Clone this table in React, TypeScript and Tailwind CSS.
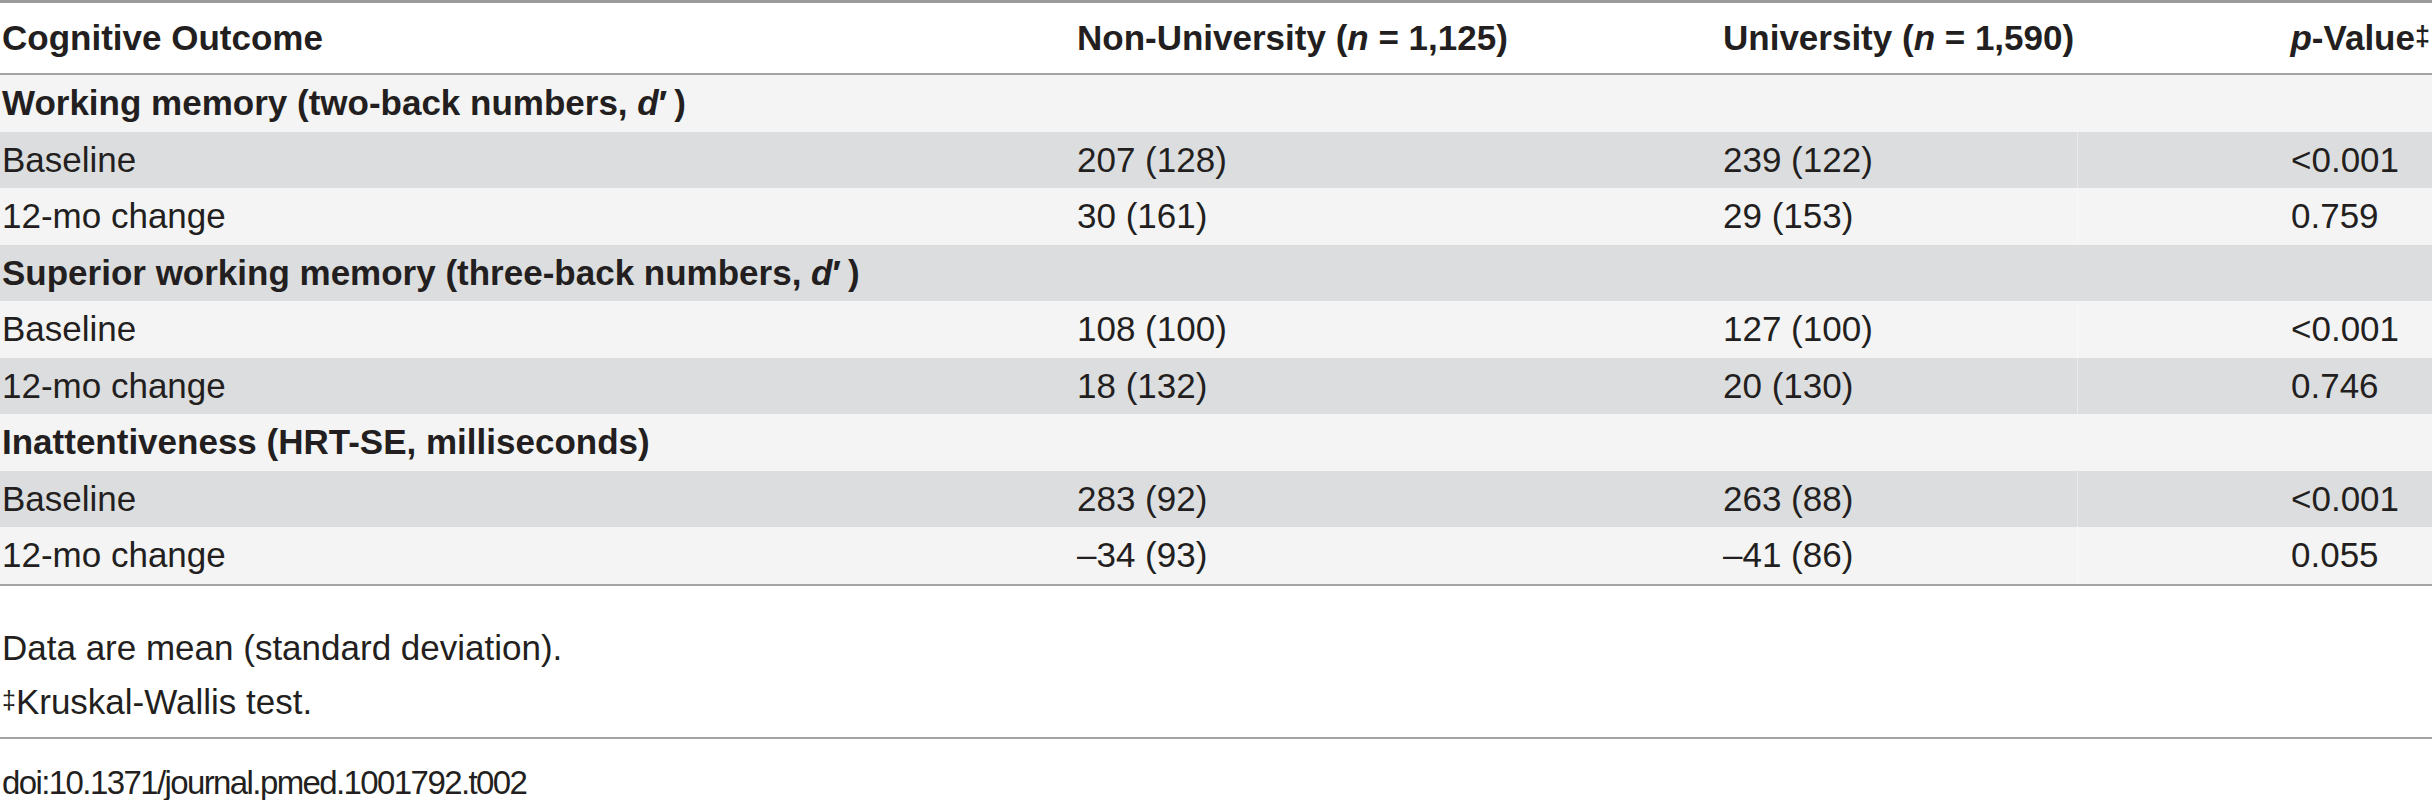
const rows: { label: string; group?: boolean; a?: string; b?: string; p?: string }[] = [
  { label: 'Working memory (two-back numbers, d)', group: true },
  { label: 'Baseline', a: '207 (128)', b: '239 (122)', p: '<0.001' },
  { label: '12-mo change', a: '30 (161)', b: '29 (153)', p: '0.759' },
  { label: 'Superior working memory (three-back numbers, d)', group: true },
  { label: 'Baseline', a: '108 (100)', b: '127 (100)', p: '<0.001' },
  { label: '12-mo change', a: '18 (132)', b: '20 (130)', p: '0.746' },
  { label: 'Inattentiveness (HRT-SE, milliseconds)', group: true },
  { label: 'Baseline', a: '283 (92)', b: '263 (88)', p: '<0.001' },
  { label: '12-mo change', a: '–34 (93)', b: '–41 (86)', p: '0.055' },
]

function GroupLabel({ text }: { text: string }) {
  // the d-prime groups get an italic d
  if (text.endsWith(', d)')) {
    return (
      <>
        {text.slice(0, -2)}
        <i>d</i>′{'\u2009'})
      </>
    )
  }
  return <>{text}</>
}

export default function App() {
  return (
    <div className="w-[2432px] bg-white text-[#231f20] text-[35px] font-['Liberation_Sans',Arial,sans-serif]">
      {/* header */}
      <div className="grid grid-cols-[1077px_646px_354px_355px] h-[75px] items-center border-t-[3px] border-b-2 border-t-[#9b9b9b] border-b-[#a3a3a3] font-bold">
        <div className="pl-[2px]">Cognitive Outcome</div>
        <div>
          Non-University (<i>n</i> = 1,125)
        </div>
        <div>
          University (<i>n</i> = 1,590)
        </div>
        <div className="text-right pr-[2px] whitespace-nowrap">
          <i>p</i>-Value<sup className="text-[27px] relative -top-[5px]">‡</sup>
        </div>
      </div>

      {/* body */}
      <div className="border-b-2 border-[#a3a3a3]">
        {rows.map((r, i) => (
          <div
            key={i}
            className={`grid grid-cols-[1077px_646px_354px_355px] h-[56.5px] items-center ${i % 2 === 0 ? 'bg-[#f4f4f4]' : 'bg-[#dcdddf]'}`}
          >
            {r.group ? (
              <div className="col-span-4 pl-[2px] font-bold whitespace-nowrap">
                <GroupLabel text={r.label} />
              </div>
            ) : (
              <>
                <div className="pl-[2px]">{r.label}</div>
                <div>{r.a}</div>
                <div>{r.b}</div>
                <div className="h-full flex items-center pl-[213px] border-l border-white/40">{r.p}</div>
              </>
            )}
          </div>
        ))}
      </div>

      {/* footnotes */}
      <div className="pt-[35px] pb-[8px] leading-[54px] pl-[2px] border-b-2 border-[#a3a3a3]">
        <p>Data are mean (standard deviation).</p>
        <p>
          <sup className="text-[25px] relative -top-[5px]">‡</sup>Kruskal-Wallis test.
        </p>
      </div>
      <p className="pt-[17px] leading-[54px] pl-[2px] text-[33px] tracking-[-1.6px]">doi:10.1371/journal.pmed.1001792.t002</p>
    </div>
  )
}
